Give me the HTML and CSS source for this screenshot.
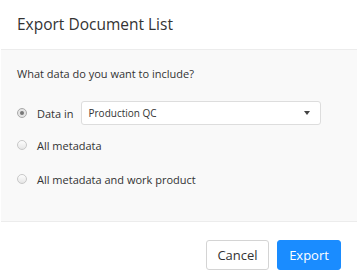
FILE: index.html
```html
<!DOCTYPE html>
<html lang="en">
<head>
    <meta charset="UTF-8">
    <title>Export Document List</title>
    <link rel="stylesheet" href="styles.css">
</head>
<body>
    <div class="modal">
        <div class="modal-header">Export Document List</div>
        <div class="modal-body">
            <p class="question">What data do you want to include?</p>
            <div class="option first">
                <span class="radio checked"></span>
                <span class="label">Data in</span>
                <div class="select">
                    <span>Production QC</span>
                    <span class="caret"></span>
                </div>
            </div>
            <div class="option">
                <span class="radio"></span>
                <span class="label">All metadata</span>
            </div>
            <div class="option">
                <span class="radio"></span>
                <span class="label">All metadata and work product</span>
            </div>
        </div>
        <div class="modal-footer">
            <button class="btn">Cancel</button>
            <button class="btn primary">Export</button>
        </div>
    </div>
</body>
</html>
```

FILE: styles.css
```css
body { margin: 0; font-family: "Open Sans", Arial, sans-serif; color: #333; background: #fff; }
.modal { width: 356px; margin-left: 1px; }
.modal-header { padding: 12px 16px 13px; font-size: 15.5px; line-height: 24px; color: #333; }
.modal-body { background: #f9f9f9; border-top: 1px solid #ececec; border-bottom: 1px solid #ececec; padding: 15px 16px 30px 16px; height: 126px; }
.question { margin: 0; font-size: 11px; line-height: 18px; }
.option { display: flex; align-items: center; height: 24px; margin-top: 10px; font-size: 11px; }
.option.first { margin-top: 18px; margin-bottom: 0; }
.option.first + .option { margin-top: 8px; }
.radio { width: 8px; height: 8px; border-radius: 50%; border: 1px solid #c8c8c8; background: linear-gradient(#fdfdfd, #e6e6e6); margin-right: 10px; box-sizing: content-box; position: relative; }
.radio.checked { border-color: #aaa; background: #e4e4e4; }
.radio.checked::after { content: ""; position: absolute; left: 2px; top: 2px; width: 4px; height: 4px; border-radius: 50%; background: #777; }
.label { color: #333; }
.select { margin-left: 7px; height: 22px; border: 1px solid #ddd; border-radius: 3px; background: #fff; display: flex; align-items: center; justify-content: space-between; padding: 0 10px 0 7px; box-sizing: content-box; font-size: 10px; width: 221px; }
.caret { width: 0; height: 0; border-left: 3.5px solid transparent; border-right: 3.5px solid transparent; border-top: 4px solid #444; }
.modal-footer { display: flex; justify-content: flex-end; gap: 8px; padding: 18px 16px 0 16px; }
.btn { font-family: "Open Sans", Arial, sans-serif; font-size: 13px; height: 30px; width: 63px; border: 1px solid #d4d4d4; border-radius: 3px; background: #fff; color: #333; padding: 0; }
.btn.primary { background: #1a8cff; border-color: #1a8cff; color: #fff; width: 64px; }
```
